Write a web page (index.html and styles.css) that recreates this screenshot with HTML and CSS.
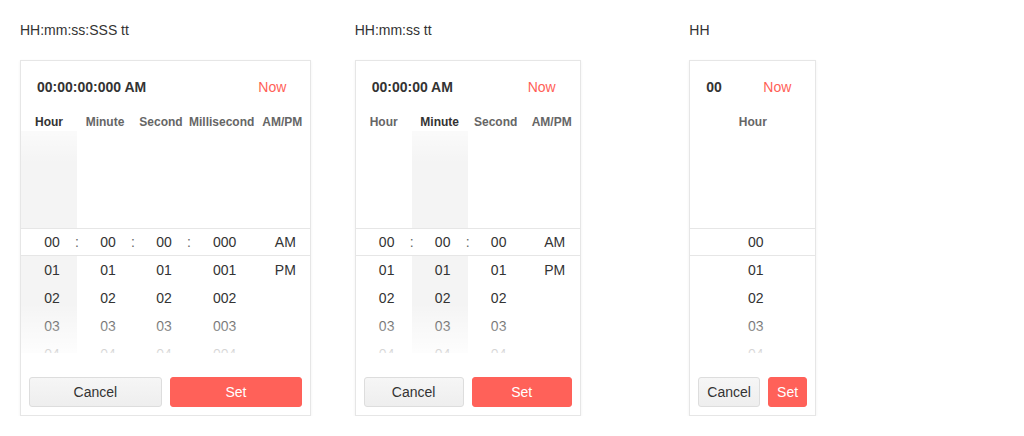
FILE: index.html
```html
<!DOCTYPE html>
<html lang="en">
<head>
  <meta charset="UTF-8">
  <meta name="viewport" content="width=device-width, initial-scale=1.0">
  <title>Time picker</title>
  <link rel="stylesheet" href="styles.css">
</head>
<body>
  <div class="demos">

    <section class="demo">
      <p class="label">HH:mm:ss:SSS tt</p>
      <div class="picker">
        <div class="picker-head">
          <span class="picker-value">00:00:00:000 AM</span>
          <button class="now">Now</button>
        </div>
        <div class="picker-cols">
          <div class="col active">
            <div class="col-title">Hour</div>
            <ul class="wheel"><li class="sel sep">00</li><li>01</li><li>02</li><li>03</li><li>04</li></ul>
          </div>
          <div class="col">
            <div class="col-title">Minute</div>
            <ul class="wheel"><li class="sel sep">00</li><li>01</li><li>02</li><li>03</li><li>04</li></ul>
          </div>
          <div class="col">
            <div class="col-title">Second</div>
            <ul class="wheel"><li class="sel sep">00</li><li>01</li><li>02</li><li>03</li><li>04</li></ul>
          </div>
          <div class="col">
            <div class="col-title">Millisecond</div>
            <ul class="wheel"><li class="sel">000</li><li>001</li><li>002</li><li>003</li><li>004</li></ul>
          </div>
          <div class="col">
            <div class="col-title">AM/PM</div>
            <ul class="wheel"><li class="sel">AM</li><li>PM</li></ul>
          </div>
          <div class="band"></div>
          <div class="fade"></div>
        </div>
        <div class="picker-foot">
          <button class="btn btn-cancel">Cancel</button>
          <button class="btn btn-set">Set</button>
        </div>
      </div>
    </section>

    <section class="demo">
      <p class="label">HH:mm:ss tt</p>
      <div class="picker">
        <div class="picker-head">
          <span class="picker-value">00:00:00 AM</span>
          <button class="now">Now</button>
        </div>
        <div class="picker-cols">
          <div class="col">
            <div class="col-title">Hour</div>
            <ul class="wheel"><li class="sel sep">00</li><li>01</li><li>02</li><li>03</li><li>04</li></ul>
          </div>
          <div class="col active">
            <div class="col-title">Minute</div>
            <ul class="wheel"><li class="sel sep">00</li><li>01</li><li>02</li><li>03</li><li>04</li></ul>
          </div>
          <div class="col">
            <div class="col-title">Second</div>
            <ul class="wheel"><li class="sel">00</li><li>01</li><li>02</li><li>03</li><li>04</li></ul>
          </div>
          <div class="col">
            <div class="col-title">AM/PM</div>
            <ul class="wheel"><li class="sel">AM</li><li>PM</li></ul>
          </div>
          <div class="band"></div>
          <div class="fade"></div>
        </div>
        <div class="picker-foot">
          <button class="btn btn-cancel">Cancel</button>
          <button class="btn btn-set">Set</button>
        </div>
      </div>
    </section>

    <section class="demo">
      <p class="label">HH</p>
      <div class="picker">
        <div class="picker-head">
          <span class="picker-value">00</span>
          <button class="now">Now</button>
        </div>
        <div class="picker-cols">
          <div class="col">
            <div class="col-title">Hour</div>
            <ul class="wheel"><li class="sel">00</li><li>01</li><li>02</li><li>03</li><li>04</li></ul>
          </div>
          <div class="band"></div>
          <div class="fade"></div>
        </div>
        <div class="picker-foot">
          <button class="btn btn-cancel">Cancel</button>
          <button class="btn btn-set">Set</button>
        </div>
      </div>
    </section>

  </div>
</body>
</html>
```

FILE: styles.css
```css
* {
  box-sizing: border-box;
}
body {
  margin: 0;
  font-family: "Liberation Sans", Arial, sans-serif;
  color: #333;
  background: #fff;
}
.demos {
  display: grid;
  grid-template-columns: repeat(3, 1fr);
  gap: 20px;
  padding: 20px 20px 0;
}
.demo {
  display: flex;
  flex-direction: column;
  align-items: flex-start;
}
.label {
  margin: 0 0 20px;
  font-size: 14px;
  line-height: 20px;
  color: #333;
}

.picker {
  width: max-content;
  min-width: 127px;
  border: 1px solid #e6e6e6;
  background: #fff;
  box-shadow: 0 1px 3px rgba(0, 0, 0, 0.06);
}
.picker-head {
  display: flex;
  align-items: center;
  justify-content: space-between;
  height: 52px;
  padding: 0 16px;
}
.picker-value {
  font-size: 14px;
  font-weight: bold;
  color: #333;
}
.now {
  padding: 0 8px;
  border: 0;
  background: none;
  font-family: inherit;
  font-size: 14px;
  line-height: 20px;
  color: #ff5f57;
  cursor: pointer;
}

.picker-cols {
  position: relative;
  display: flex;
  height: 240px;
  overflow: hidden;
}
.col {
  flex: 1 0 auto;
  min-width: 56px;
  text-align: center;
}
.col-title {
  font-size: 12px;
  font-weight: bold;
  line-height: 18px;
  color: #666;
  white-space: nowrap;
}
.col.active .col-title {
  color: #333;
}
.wheel {
  list-style: none;
  margin: 0;
  padding: 97px 0 0;
  height: 222px;
  font-size: 14px;
}
.col.active .wheel {
  background: #f4f4f4;
}
.wheel li {
  position: relative;
  height: 28px;
  padding-left: 6px;
  line-height: 28px;
  color: #333;
}
.wheel li.sel {
  background: #fff;
}
.wheel li.sep::after {
  content: ":";
  position: absolute;
  top: 0;
  right: 0;
  z-index: 1;
  transform: translateX(50%);
  color: #666;
}
.band {
  position: absolute;
  left: 0;
  right: 0;
  top: 115px;
  height: 28px;
  z-index: 2;
  border-top: 1px solid #e6e6e6;
  border-bottom: 1px solid #e6e6e6;
  pointer-events: none;
}
.fade {
  position: absolute;
  left: 0;
  right: 0;
  top: 18px;
  height: 222px;
  z-index: 3;
  pointer-events: none;
  background: linear-gradient(to bottom,
    rgba(255, 255, 255, 0.6) 0,
    rgba(255, 255, 255, 0) 32px,
    rgba(255, 255, 255, 0) 172px,
    rgba(255, 255, 255, 0.85) 222px);
}

.picker-foot {
  display: flex;
  gap: 8px;
  padding: 24px 8px 8px;
}
.btn {
  flex: 1;
  height: 30px;
  padding: 0 8px;
  border: 1px solid #ddd;
  border-radius: 3px;
  font-family: inherit;
  font-size: 14px;
  white-space: nowrap;
  cursor: pointer;
}
.btn-cancel {
  background: linear-gradient(to bottom, #f6f6f6, #eeeeee);
  color: #333;
}
.btn-set {
  background: #ff6159;
  border-color: #ff6159;
  color: #fff;
}
```
